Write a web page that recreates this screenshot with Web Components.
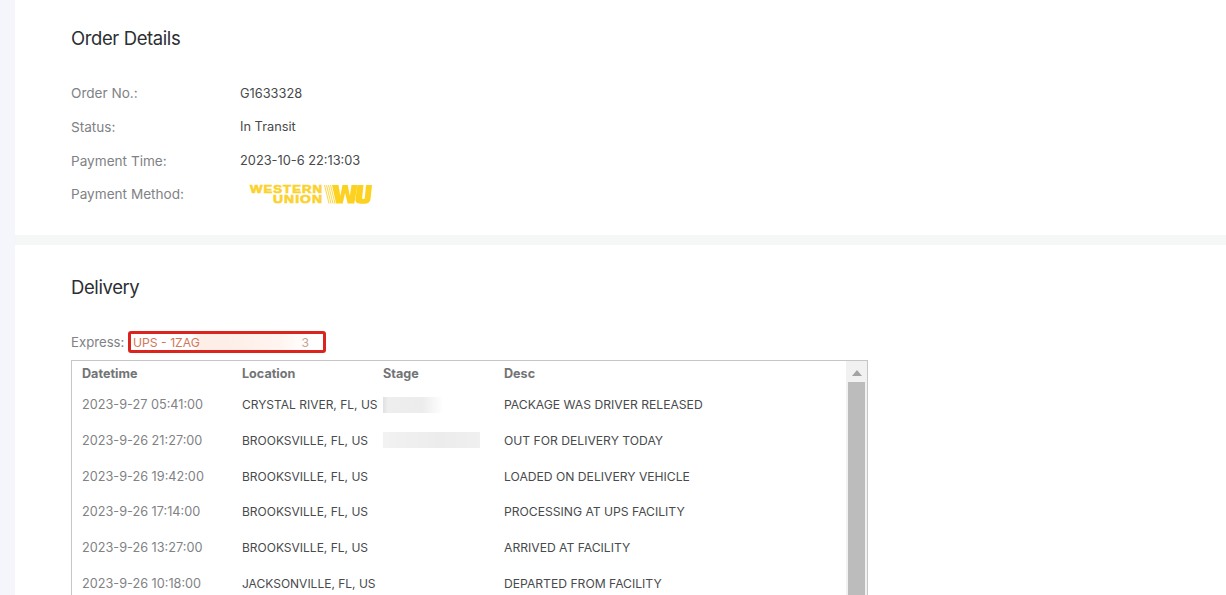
<!DOCTYPE html>
<html>
<head>
<meta charset="utf-8">
<title>Order Details</title>
<style>
  html, body { margin: 0; height: 595px; overflow: hidden; background: #f4f6fb; }
  body { font-family: Inter, "Liberation Sans", sans-serif; padding-left: 15px; }
  order-page { height: 595px; }
</style>
</head>
<body>
<order-page>
  <section-card heading="Order Details" style="--card-height: 235px; --head-top: 26px; --head-gap: 26.5px">
    <detail-row label="Order No.:">G1633328</detail-row>
    <detail-row label="Status:">In Transit</detail-row>
    <detail-row label="Payment Time:">2023-10-6 22:13:03</detail-row>
    <detail-row label="Payment Method:"><wu-logo></wu-logo></detail-row>
  </section-card>
  <section-card heading="Delivery" style="--card-height: 350px; --head-top: 30px; --head-gap: 32px">
    <express-line label="Express:" value="UPS - 1ZAG" tail="3"></express-line>
    <tracking-table>
      <tracking-row head dt="Datetime" loc="Location" stage="Stage" desc="Desc"></tracking-row>
      <tracking-row dt="2023-9-27 05:41:00" loc="CRYSTAL RIVER, FL, US" desc="PACKAGE WAS DRIVER RELEASED" blur="short"></tracking-row>
      <tracking-row dt="2023-9-26 21:27:00" loc="BROOKSVILLE, FL, US" desc="OUT FOR DELIVERY TODAY" blur="long"></tracking-row>
      <tracking-row dt="2023-9-26 19:42:00" loc="BROOKSVILLE, FL, US" desc="LOADED ON DELIVERY VEHICLE"></tracking-row>
      <tracking-row dt="2023-9-26 17:14:00" loc="BROOKSVILLE, FL, US" desc="PROCESSING AT UPS FACILITY"></tracking-row>
      <tracking-row dt="2023-9-26 13:27:00" loc="BROOKSVILLE, FL, US" desc="ARRIVED AT FACILITY"></tracking-row>
      <tracking-row dt="2023-9-26 10:18:00" loc="JACKSONVILLE, FL, US" desc="DEPARTED FROM FACILITY"></tracking-row>
    </tracking-table>
  </section-card>
</order-page>

<script>
class OrderPage extends HTMLElement {
  constructor() {
    super();
    this.attachShadow({ mode: 'open' });
    this.shadowRoot.innerHTML = `
      <style>
        :host { display: flex; flex-direction: column; gap: 10px; background: #f5f6f6; }
      </style>
      <slot></slot>
    `;
  }
}

class SectionCard extends HTMLElement {
  constructor() {
    super();
    this.attachShadow({ mode: 'open' });
    this.shadowRoot.innerHTML = `
      <style>
        :host {
          display: block;
          box-sizing: border-box;
          height: var(--card-height);
          padding: var(--head-top) 0 0 56px;
          background: #fff;
          overflow: hidden;
        }
        h2 {
          margin: 0 0 var(--head-gap);
          font-size: 18.5px;
          line-height: 24px;
          font-weight: 400;
          letter-spacing: -0.4px;
          color: #2c2e32;
        }
      </style>
      <h2>${this.getAttribute('heading') || ''}</h2>
      <slot></slot>
    `;
  }
}

class DetailRow extends HTMLElement {
  constructor() {
    super();
    this.attachShadow({ mode: 'open' });
    this.shadowRoot.innerHTML = `
      <style>
        :host {
          display: grid;
          grid-template-columns: 169px 1fr;
          align-items: center;
          height: 33.67px;
        }
        .label { color: #808285; font-size: 13.6px; }
        .value { color: #47494b; font-size: 12.8px; display: flex; align-items: center; }
      </style>
      <div class="label">${this.getAttribute('label')}</div>
      <div class="value"><slot></slot></div>
    `;
  }
}

class WuLogo extends HTMLElement {
  constructor() {
    super();
    this.attachShadow({ mode: 'open' });
    this.shadowRoot.innerHTML = `
      <style>
        :host { display: block; height: 22px; margin-left: 9px; }
        svg { display: block; }
        text { font-family: "Liberation Sans", sans-serif; font-weight: 700; font-size: 11px; letter-spacing: 0.8px; fill: #fbd22c; stroke: #fbd22c; stroke-width: 0.6; }
      </style>
      <svg width="124" height="22" viewBox="0 0 124 22">
        <text x="1" y="10" textLength="73" lengthAdjust="spacingAndGlyphs">WESTERN</text>
        <text x="24" y="20" textLength="50" lengthAdjust="spacingAndGlyphs">UNION</text>
        <path stroke="#fbd22c" stroke-width="0.9" fill="none" d="M75.5 2L80 20.5M77.5 2L82 20.5M79.5 2L84 20.5M81.5 2L86 20.5"/>
        <path fill="#fdd11f" d="M83 2h6.5l1.8 11 2.2-11h5.2l2.2 11 1.6-11h6l-3.2 18.5h-6.6l-2.6-10.5-2.4 10.5h-6.6z"/>
        <path fill="#fdd11f" d="M108.5 2h6l-1.3 12.5c-.1 1 .3 1.5 1.2 1.5s1.4-.5 1.5-1.5L117 2h6l-1.5 14c-.3 3-2.4 4.7-6 4.7h-4c-3.7 0-5.4-1.7-5.1-4.7z"/>
      </svg>
    `;
  }
}

class ExpressLine extends HTMLElement {
  constructor() {
    super();
    this.attachShadow({ mode: 'open' });
    this.shadowRoot.innerHTML = `
      <style>
        :host {
          display: flex;
          align-items: center;
          height: 22px;
          margin-bottom: 7px;
          font-size: 13.2px;
          color: #808285;
        }
        .label { width: 57px; }
        .box {
          box-sizing: border-box;
          width: 198px;
          height: 22px;
          border: 3px solid #dc241f;
          border-radius: 3px;
          padding-left: 2px;
          display: flex;
          align-items: center;
          justify-content: space-between;
          font-size: 12.2px;
          color: #d2785a;
          background: linear-gradient(90deg, #fff 0, #fff 60px, #fdeee6 70px, #fdf0e9 110px, #fff5f0 150px, #fff 176px);
          white-space: nowrap;
        }
        .tail { padding-right: 14px; color: #c9a48f; }
      </style>
      <div class="label">${this.getAttribute('label')}</div>
      <div class="box"><span>${this.getAttribute('value')}</span><span class="tail">${this.getAttribute('tail')}</span></div>
    `;
  }
}

class TrackingTable extends HTMLElement {
  constructor() {
    super();
    this.attachShadow({ mode: 'open' });
    this.shadowRoot.innerHTML = `
      <style>
        :host {
          display: flex;
          box-sizing: border-box;
          width: 797px;
          height: 300px;
          border: 1px solid #c6c6c6;
          background: #fff;
          overflow: hidden;
        }
        .rows { flex: 1; min-width: 0; padding-top: 3px; }
        .bar { width: 21px; background: #f1f1f1; display: flex; flex-direction: column; align-items: center; }
        .arrow {
          margin: 9px 0 6px;
          width: 0; height: 0;
          border-left: 5px solid transparent;
          border-right: 5px solid transparent;
          border-bottom: 6px solid #a3a3a3;
        }
        .thumb { width: 17px; flex: 1; background: #bcbcbc; }
      </style>
      <div class="rows"><slot></slot></div>
      <div class="bar"><div class="arrow"></div><div class="thumb"></div></div>
    `;
  }
}

class TrackingRow extends HTMLElement {
  constructor() {
    super();
    this.attachShadow({ mode: 'open' });
    const blur = this.getAttribute('blur');
    const mask = blur ? `<i class="mask ${blur}"></i>` : '';
    this.shadowRoot.innerHTML = `
      <style>
        :host {
          display: grid;
          grid-template-columns: 160px 141px 121px 1fr;
          align-items: center;
          height: 35.65px;
          padding-left: 10px;
          font-size: 12.15px;
          color: #484a4d;
          white-space: nowrap;
        }
        :host([head]) { height: 18px; margin-bottom: 5px; font-weight: 700; font-size: 12.6px; color: #737476; }
        .dt { color: #808285; font-size: 12.7px; }
        .loc { font-size: 12px; }
        :host([head]) .dt { color: #737476; font-size: 12.6px; }
        :host([head]) .loc { font-size: 12.6px; }
        .stage { position: relative; display: flex; align-items: center; height: 100%; }
        .mask { position: absolute; top: 50%; left: 0; height: 16px; margin-top: -8px; }
        .short { width: 60px; background: linear-gradient(90deg, #e0e0e0 0, #eee 8%, #ececec 65%, #fff 100%); }
        .long { width: 97px; background: linear-gradient(90deg, #f2f2f2, #ececec 60%, #f0f0f0); }
      </style>
      <div class="dt">${this.getAttribute('dt')}</div>
      <div class="loc">${this.getAttribute('loc')}</div>
      <div class="stage">${this.getAttribute('stage') || ''}${mask}</div>
      <div class="desc">${this.getAttribute('desc')}</div>
    `;
  }
}

customElements.define('order-page', OrderPage);
customElements.define('section-card', SectionCard);
customElements.define('detail-row', DetailRow);
customElements.define('wu-logo', WuLogo);
customElements.define('express-line', ExpressLine);
customElements.define('tracking-table', TrackingTable);
customElements.define('tracking-row', TrackingRow);
</script>
</body>
</html>
